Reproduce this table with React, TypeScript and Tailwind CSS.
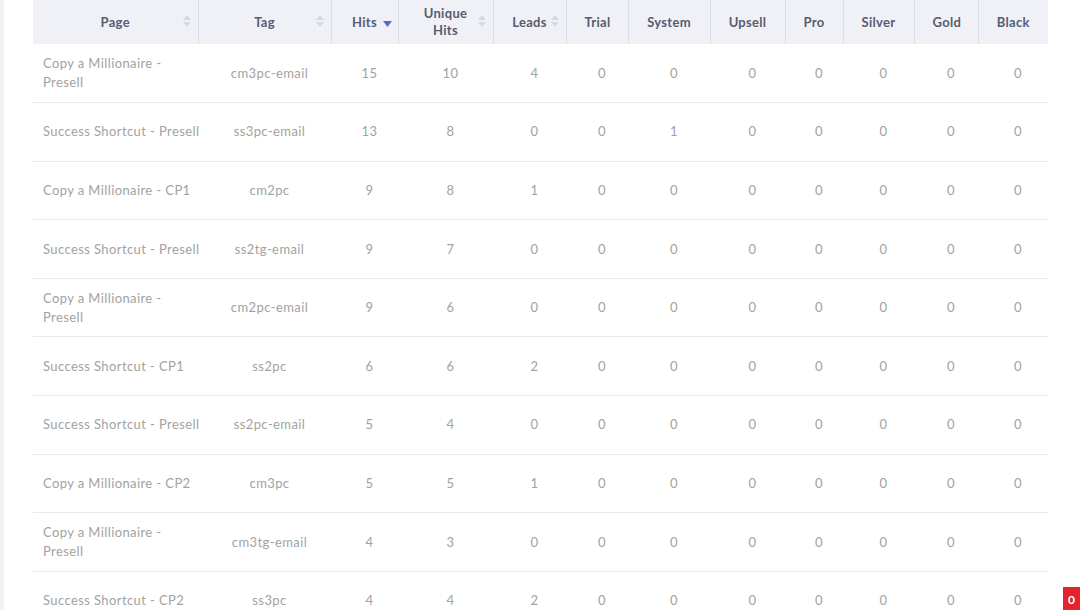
const cols = [
  { label: "Page", w: "w-[165px]", sort: "both" },
  { label: "Tag", w: "w-[133px]", sort: "both" },
  { label: "Hits", w: "w-[67px]", sort: "down" },
  { label: "Unique Hits", w: "w-[95px]", sort: "both" },
  { label: "Leads", w: "w-[73px]", sort: "both" },
  { label: "Trial", w: "w-[62px]", sort: "" },
  { label: "System", w: "w-[82px]", sort: "" },
  { label: "Upsell", w: "w-[75px]", sort: "" },
  { label: "Pro", w: "w-[58px]", sort: "" },
  { label: "Silver", w: "w-[71px]", sort: "" },
  { label: "Gold", w: "w-[64px]", sort: "" },
  { label: "Black", w: "w-[70px]", sort: "" },
];

// "\n" marks where the page name wraps in the narrow first column
const rows: (string | number)[][] = [
  ["Copy a Millionaire -\nPresell", "cm3pc-email", 15, 10, 4, 0, 0, 0, 0, 0, 0, 0],
  ["Success Shortcut - Presell", "ss3pc-email", 13, 8, 0, 0, 1, 0, 0, 0, 0, 0],
  ["Copy a Millionaire - CP1", "cm2pc", 9, 8, 1, 0, 0, 0, 0, 0, 0, 0],
  ["Success Shortcut - Presell", "ss2tg-email", 9, 7, 0, 0, 0, 0, 0, 0, 0, 0],
  ["Copy a Millionaire -\nPresell", "cm2pc-email", 9, 6, 0, 0, 0, 0, 0, 0, 0, 0],
  ["Success Shortcut - CP1", "ss2pc", 6, 6, 2, 0, 0, 0, 0, 0, 0, 0],
  ["Success Shortcut - Presell", "ss2pc-email", 5, 4, 0, 0, 0, 0, 0, 0, 0, 0],
  ["Copy a Millionaire - CP2", "cm3pc", 5, 5, 1, 0, 0, 0, 0, 0, 0, 0],
  ["Copy a Millionaire -\nPresell", "cm3tg-email", 4, 3, 0, 0, 0, 0, 0, 0, 0, 0],
  ["Success Shortcut - CP2", "ss3pc", 4, 4, 2, 0, 0, 0, 0, 0, 0, 0],
];

function SortIcon({ mode }: { mode: string }) {
  if (mode === "down") {
    return (
      <svg width="9" height="6" viewBox="0 0 9 6" className="absolute right-[6px] top-[21px]">
        <path d="M0 0 L9 0 L4.5 6 Z" fill="#5b6ac4" />
      </svg>
    );
  }
  return (
    <svg width="8" height="14" viewBox="0 0 8 14" className="absolute right-[7px] top-[14px]">
      <path d="M0 6 L8 6 L4 1 Z" fill="#d7d9e2" />
      <path d="M0 8 L8 8 L4 13 Z" fill="#d7d9e2" />
    </svg>
  );
}

export default function App() {
  return (
    <div className="relative w-[1080px] h-[610px] overflow-hidden bg-white font-['Lato',sans-serif]">
      {/* left page gutter */}
      <div className="absolute left-0 top-0 h-full w-[4px] bg-[#f1f2f7]" />
      <div className="pl-[33px]">
        <table className="border-collapse table-fixed w-[1015px]">
          <thead>
            <tr className="h-[44px] bg-[#f0f1f7]">
              {cols.map((c, i) => (
                <th
                  key={c.label}
                  className={`${c.w} relative px-[18px] text-[13px] font-bold leading-[17px] tracking-[0.3px] text-[#585c70] text-center ${
                    i < cols.length - 1 ? "border-r border-[#dcdfe8]" : ""
                  }`}
                >
                  {c.label === "Unique Hits" ? (
                    <span className="inline-block w-[52px]">Unique Hits</span>
                  ) : (
                    c.label
                  )}
                  {c.sort && <SortIcon mode={c.sort} />}
                </th>
              ))}
            </tr>
          </thead>
          <tbody>
            {rows.map((r, ri) => (
              <tr key={ri} className="h-[58.6px] border-b border-[#e8eaef]">
                {r.map((v, ci) => (
                  <td
                    key={ci}
                    className={`text-[13px] leading-[19px] tracking-[0.4px] text-[#a2a2a2] ${
                      ci === 0
                        ? "text-left pl-[10px] whitespace-pre"
                        : "text-center pl-[10px]"
                    }`}
                  >
                    {v}
                  </td>
                ))}
              </tr>
            ))}
          </tbody>
        </table>
      </div>
      {/* chat badge */}
      <div className="absolute right-0 top-[587px] w-[17px] h-[26px] bg-[#e5232e] text-white text-[12px] font-bold leading-[26px] pl-[5px]">
        0
      </div>
    </div>
  );
}
